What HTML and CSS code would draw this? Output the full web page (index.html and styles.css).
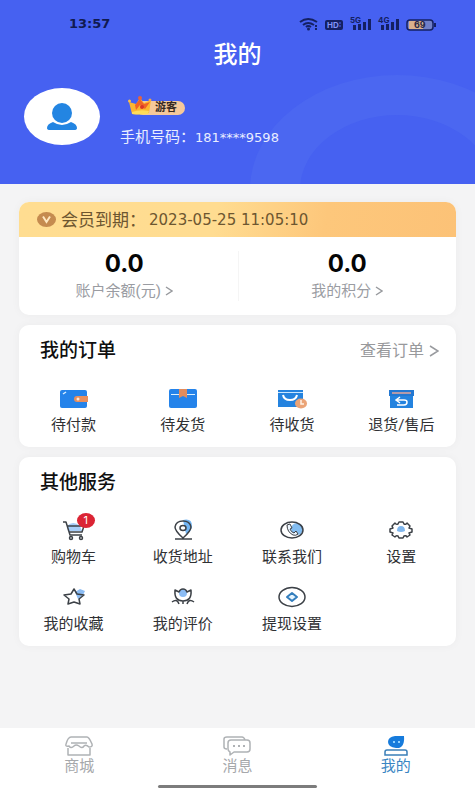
FILE: index.html
```html
<!DOCTYPE html>
<html lang="zh-CN">
<head>
<meta charset="utf-8">
<meta name="viewport" content="width=device-width, initial-scale=1">
<title>我的</title>
<link rel="stylesheet" href="styles.css">
</head>
<body>
<header class="hero">
  <svg class="hero-ring" width="294" height="230" viewBox="0 0 294 230" aria-hidden="true"><path d="M0 115A147 115 0 0 1 294 115A147 115 0 0 1 0 115ZM50 115A97 75 0 0 0 244 115A97 75 0 0 0 50 115Z" fill="#4b67f1"/></svg>
  <div class="status">
    <time class="clock">13:57</time>
    <svg width="138" height="16" viewBox="0 0 138 16" aria-hidden="true">
      <g fill="none" stroke="#142062" stroke-width="2"><path d="M1 6Q9 0 18 6M4 9Q9 5 15 9M7 11Q9 9 12 11"/></g>
      <circle cx="9.500" cy="13" r="1.500" fill="#142062"/><path d="M16 9h2v2h-2zM16 12h2v2h-2z" fill="#142062"/>
      <rect x="26" y="4" width="18" height="10" rx="2" fill="#142062"/>
      <text x="28" y="12" class="tiny tiny-light">HD</text><path d="M41 6v6" stroke="#4661f1" stroke-dasharray="2 1"/>
      <text x="51" y="7" class="tiny">5G</text><path d="M54 9h3v5h-3zM59 8h3v6h-3zM64 6h3v8h-3zM69 3h3v11h-3z" fill="#142062"/>
      <text x="79" y="7" class="tiny">4G</text><path d="M82 9h3v5h-3zM87 8h3v6h-3zM92 6h3v8h-3zM97 3h3v11h-3z" fill="#142062"/>
      <rect x="108" y="4" width="26" height="10" rx="3" fill="#7180c8" stroke="#142062" stroke-width="1.500"/><path d="M110 5h14v8h-14z" fill="#d9b08d"/><path d="M136 7v4" stroke="#142062" stroke-width="2"/>
      <text x="115" y="12" class="battery">69</text>
    </svg>
  </div>
  <h1 class="title">我的</h1>
  <div class="profile">
    <div class="avatar">
      <svg width="30" height="28" viewBox="0 0 30 28" aria-hidden="true"><ellipse cx="15" cy="10" rx="10" ry="10" fill="#2385e2"/><path d="M6 19Q15 25 24 19Q30 21 30 25Q30 27 27 27H3Q0 27 0 25Q0 21 6 19Z" fill="#2385e2"/></svg>
    </div>
    <div class="who">
      <div class="rank">
        <svg class="crown" width="24" height="20" viewBox="0 0 24 20" aria-hidden="true"><path d="M1 6L8 8L12 2L16 7L23 4L21 17Q12 19 4 18Z" fill="#fcb62f"/><path d="M7 9L12 3L16 8L22 6L17 13L12 9L8 14Z" fill="#ef6327"/><path d="M4 16Q12 13 21 15L20 18Q12 19 4 18Z" fill="#ffdc58"/><circle cx="1.500" cy="5" r="1.500" fill="#fbbf4a"/><circle cx="12" cy="2" r="2" fill="#e8623d"/><circle cx="22" cy="4" r="1.500" fill="#f4a54b"/><circle cx="14" cy="11" r="2" fill="#d93428"/></svg>
        <span class="rank-name">游客</span>
      </div>
      <p class="phone">手机号码：<span class="num">181****9598</span></p>
    </div>
  </div>
</header>

<main class="content">
  <section class="card">
    <div class="member">
      <svg width="19" height="15" viewBox="0 0 19 15" aria-hidden="true"><ellipse cx="9.500" cy="7.500" rx="9.500" ry="7.500" fill="#c58b4f"/><path d="M6 4.500L9.500 10L13 4.500" fill="none" stroke="#ffe8c0" stroke-width="2"/></svg>
      <span>会员到期：</span><time class="num expiry">2023-05-25 11:05:10</time>
    </div>
    <div class="balances">
      <a class="balance" href="#balance"><strong class="amount">0.0</strong><span class="caption">账户余额(元)<svg width="8" height="10" viewBox="0 0 8 10" aria-hidden="true"><path d="M1 1L7 5L1 9"/></svg></span></a>
      <a class="balance" href="#points"><strong class="amount">0.0</strong><span class="caption">我的积分<svg width="8" height="10" viewBox="0 0 8 10" aria-hidden="true"><path d="M1 1L7 5L1 9"/></svg></span></a>
    </div>
  </section>

  <section class="card">
    <div class="card-head">
      <h2>我的订单</h2>
      <a class="more" href="#orders">查看订单<svg width="10" height="12" viewBox="0 0 10 12" aria-hidden="true"><path d="M1 1L9 6L1 11"/></svg></a>
    </div>
    <nav class="grid orders" aria-label="我的订单">
      <a class="item" href="#pay"><svg width="32" height="24" viewBox="0 0 32 24" aria-hidden="true"><rect x="2" y="3" width="27" height="18" rx="2" fill="#2483ea"/><path d="M5 7L8 5" stroke="#d8edff" stroke-width="1.500"/><path d="M19 9H30V15H19Q16 15 16 12Q16 9 19 9Z" fill="#e98f5d"/><circle cx="20" cy="12" r="1.500" fill="#ffe7d4"/></svg>待付款</a>
      <a class="item" href="#ship"><svg width="32" height="24" viewBox="0 0 32 24" aria-hidden="true"><rect x="2" y="2" width="28" height="19" rx="2" fill="#2483ea"/><path d="M4 7.500H28" stroke="#d9efff"/><path d="M12 2H20V11L16 9L12 11Z" fill="#e28c5d"/></svg>待发货</a>
      <a class="item" href="#receive"><svg width="32" height="24" viewBox="0 0 32 24" aria-hidden="true"><path d="M2 3H27V20H2Z" fill="#2483df"/><path d="M2 5.500H27" stroke="#c9e6ff"/><path d="M7 8Q8 13 14 13Q20 13 21 8" fill="none" stroke="#fff" stroke-width="2"/><ellipse cx="25" cy="16.500" rx="6" ry="5" fill="#eba477"/><path d="M25 13V17H28" fill="none" stroke="#fff1e4" stroke-width="1.500"/></svg>待收货</a>
      <a class="item" href="#refund"><svg width="32" height="24" viewBox="0 0 32 24" aria-hidden="true"><path d="M4 3H29V9H4Z" fill="#2378d2"/><path d="M7 5H26V7H7Z" fill="#b39aaa"/><path d="M5 9H28V21H5Z" fill="#2483df"/><path d="M15 10L11 13L15 16M12 13H19Q22 13 22 15Q22 18 19 18H12" fill="none" stroke="#fff" stroke-width="1.500"/></svg>退货/售后</a>
    </nav>
  </section>

  <section class="card">
    <div class="card-head"><h2>其他服务</h2></div>
    <nav class="grid services" aria-label="其他服务">
      <a class="item" href="#cart"><span class="icon"><svg width="32" height="24" viewBox="0 0 32 24" aria-hidden="true"><path d="M9 8Q15 2 22 8L24 13H10Z" fill="#a7cdf8"/><path class="line" d="M5 4H8L12 17H24M9 8H26L24 14H11"/><circle class="line" cx="13" cy="20" r="1.500"/><circle class="line" cx="23" cy="20" r="1.500"/></svg><span class="badge">1</span></span>购物车</a>
      <a class="item" href="#address"><svg width="32" height="24" viewBox="0 0 32 24" aria-hidden="true"><path d="M16 2Q25 0 25 8Q25 13 19 16Z" fill="#72b5f3"/><path class="line" d="M16 20Q8 13 8 9Q9 3 16 3Q23 3 24 9Q24 13 16 20ZM8 21H25"/><ellipse cx="16" cy="10" rx="3" ry="2.500" fill="#fff" stroke="#3c4147" stroke-width="1.500"/></svg>收货地址</a>
      <a class="item" href="#contact"><svg width="32" height="24" viewBox="0 0 32 24" aria-hidden="true"><ellipse cx="21" cy="11" rx="6" ry="6" fill="#83bdf1"/><ellipse class="line" cx="16" cy="12" rx="11" ry="8"/><path d="M11 7L14 6L16 10L14 11Q15 14 18 15L20 13L22 16Q20 18 17 17Q11 14 11 7Z" fill="#edf6ff" stroke="#3c4147"/></svg>联系我们</a>
      <a class="item" href="#settings"><svg width="32" height="24" viewBox="0 0 32 24" aria-hidden="true"><path class="line" d="M13 6L14 4H18L19 6Q21 7 22 5L25 8L24 10L27 11V14L24 15L25 17L22 19Q21 17 19 18L18 20H14L13 18Q11 17 10 19L7 17L8 15L5 14V11L8 10L7 8L10 5Q11 7 13 6Z"/><path d="M12 13Q12 8 16 8Q20 8 20 13Q16 15 12 13Z" fill="#80b7ee"/></svg>设置</a>
      <a class="item" href="#favorites"><svg width="32" height="24" viewBox="0 0 32 24" aria-hidden="true"><path d="M17 7L22 4L27 6L25 10L20 14Z" fill="#8bbcf4"/><path class="line" d="M16 4L19 9L26 10L21 14L22 19L16 17L10 19L11 14L6 10L13 9Z"/></svg>我的收藏</a>
      <a class="item" href="#reviews"><svg width="32" height="24" viewBox="0 0 32 24" aria-hidden="true"><ellipse cx="16" cy="8" rx="4" ry="4" fill="#8bbcf4"/><path class="line" d="M8 5L12 7Q13 4 16 4Q19 4 20 7L24 5Q25 16 16 16Q7 16 8 5ZM16 16V19M5 17Q10 13 12 19M27 17Q22 13 20 19"/></svg>我的评价</a>
      <a class="item" href="#withdraw"><svg width="32" height="24" viewBox="0 0 32 24" aria-hidden="true"><ellipse class="line" cx="16" cy="12" rx="13" ry="9.500"/><path d="M16 8L21 12L16 16L11 12Z" fill="#e6f5ff" stroke="#347ebd" stroke-width="2" stroke-linejoin="round"/></svg>提现设置</a>
    </nav>
  </section>
</main>

<footer class="bottom">
  <nav class="tabs" aria-label="主导航">
    <a class="tab" href="#shop"><svg width="30" height="22" viewBox="0 0 30 22" aria-hidden="true"><path class="tab-line" d="M7 2H23Q25 2 28 9Q29 12 25 12Q22 9 20 11Q18 14 15 11Q12 9 10 11Q7 14 5 11Q1 12 2 9Q4 2 7 2ZM4 13V20H26V13M7 8H23"/></svg>商城</a>
    <a class="tab" href="#messages"><svg width="30" height="22" viewBox="0 0 30 22" aria-hidden="true"><path class="tab-line" d="M5 14Q2 14 2 12V4Q2 2 5 2H20Q22 2 23 5M9 5H25Q28 5 28 8V14Q28 17 25 17H12L8 20V17Q6 16 6 14V8Q6 5 9 5Z"/><path d="M11 10h2v2h-2zM16 10h2v2h-2zM21 10h2v2h-2z" fill="#afb2b5"/></svg>消息</a>
    <a class="tab active" href="#me" aria-current="page"><svg width="30" height="22" viewBox="0 0 30 22" aria-hidden="true"><path d="M14 1H23Q24 14 15 13Q7 12 7 7Q7 2 14 1Z" fill="#167bdc"/><path d="M12 6h2v2h-2zM17 6h2v2h-2z" fill="#8ed1ff"/><path d="M6 15H24Q26 15 26 17V20H4V17Q4 15 6 15Z" fill="none" stroke="#3a7fb8" stroke-width="1.500"/></svg>我的</a>
  </nav>
  <div class="home-bar"></div>
</footer>
</body>
</html>
```
FILE: styles.css
```css
* { box-sizing: border-box; }

body {
  margin: 0;
  min-height: 100vh;
  display: flex;
  flex-direction: column;
  background: #f4f4f5;
  color: #303134;
  font: 15px/20px Roboto, "Noto Sans CJK SC", sans-serif;
}

a { color: inherit; text-decoration: none; }
h1, h2, p { margin: 0; }
svg { display: block; flex: none; }
.num { font-family: "DejaVu Sans", sans-serif; }

.hero {
  position: relative;
  overflow: hidden;
  padding: 16px 0 36px;
  background: #4661f1;
  color: #fff;
}
.hero-ring { position: absolute; top: 75px; right: -69px; }

.status {
  display: flex;
  justify-content: space-between;
  align-items: center;
  height: 16px;
  padding: 0 38px 0 69px;
}
.clock { font: 700 13px/16px "DejaVu Sans", sans-serif; color: #101a50; }
.tiny { font: 700 8px Inter, sans-serif; fill: #142062; }
.tiny-light { fill: #8294f8; }
.battery { font: 700 9px Inter, sans-serif; fill: #2b2945; }

.title {
  position: relative;
  margin-top: 9px;
  font-size: 24px;
  line-height: 28px;
  font-weight: 500;
  text-align: center;
}
.profile {
  position: relative;
  display: flex;
  gap: 20px;
  padding: 19px 24px 0;
}
.avatar {
  display: flex;
  align-items: center;
  justify-content: center;
  width: 76px;
  height: 57px;
  border-radius: 50%;
  background: #fff;
}
.who { padding-top: 8px; }
.rank { display: flex; align-items: center; height: 20px; padding-left: 8px; }
.crown { position: relative; z-index: 1; }
.rank-name {
  margin: 4px 0 0 -16px;
  padding: 0 8px 0 19px;
  border-radius: 8px;
  background: #f5c99a;
  color: #352922;
  font-size: 11px;
  line-height: 14px;
  font-weight: 700;
}
.phone { margin-top: 11px; line-height: 20px; color: #e9edff; }
.phone .num { font-size: 13px; }

.content {
  flex: 1;
  display: flex;
  flex-direction: column;
  gap: 10px;
  padding: 18px 19px 24px;
}
.card {
  overflow: hidden;
  border-radius: 10px;
  background: #fff;
  box-shadow: 0 0 10px #0000000a;
}
.member {
  display: flex;
  align-items: center;
  height: 35px;
  padding-left: 18px;
  background: linear-gradient(100deg, #ffdd91, #ffdc91 45%, #fdc77b 70%, #fcc277);
  color: #6d5630;
  font-size: 17px;
}
.member svg { margin-right: 5px; }
.expiry { padding-left: 3px; font-size: 15px; }

.balances { display: grid; grid-template-columns: 1fr 1fr; padding: 14px 0; }
.balance {
  display: flex;
  flex-direction: column;
  align-items: center;
  gap: 4px;
  padding-right: 8px;
}
.balance + .balance { padding: 0; border-left: 1px solid #f5f5f5; }
.amount { font: 700 24px/26px Inter, sans-serif; color: #050505; }
.caption { display: flex; align-items: center; gap: 4px; color: #9a9ca2; }
.caption svg, .more svg { fill: none; stroke: #999b9f; stroke-width: 1.5; }

.card-head {
  display: flex;
  align-items: center;
  justify-content: space-between;
  padding: 14px 17px 0 21px;
}
h2 { font-size: 19px; line-height: 24px; font-weight: 500; color: #101010; }
.more { display: flex; align-items: center; gap: 5px; color: #98999c; font-size: 16px; }

.grid { display: grid; grid-template-columns: repeat(4, 1fr); row-gap: 18px; }
.orders { padding: 24px 0 12px; }
.services { padding: 23px 0 12px; }
.item { display: flex; flex-direction: column; align-items: center; gap: 4px; }
.services .item { gap: 5px; }
.icon { position: relative; }
.line { fill: none; stroke: #3c4147; stroke-width: 1.5; stroke-linejoin: round; }
.badge {
  position: absolute;
  top: -5px;
  right: -5px;
  width: 18px;
  height: 15px;
  border-radius: 50%;
  background: #db2434;
  color: #fff;
  font: 11px/15px Inter, sans-serif;
  text-align: center;
}

.bottom { padding: 7px 0 7px; background: #fff; }
.tabs { display: grid; grid-template-columns: repeat(3, 1fr); }
.tab { display: flex; flex-direction: column; align-items: center; color: #a6a8ab; line-height: 18px; }
.tab-line { fill: none; stroke: #afb2b5; stroke-width: 1.5; stroke-linejoin: round; }
.active { color: #3a86c3; }
.home-bar { width: 33.4%; height: 3px; margin: 10px auto 0; border-radius: 2px; background: #7c7c7c; }
```
